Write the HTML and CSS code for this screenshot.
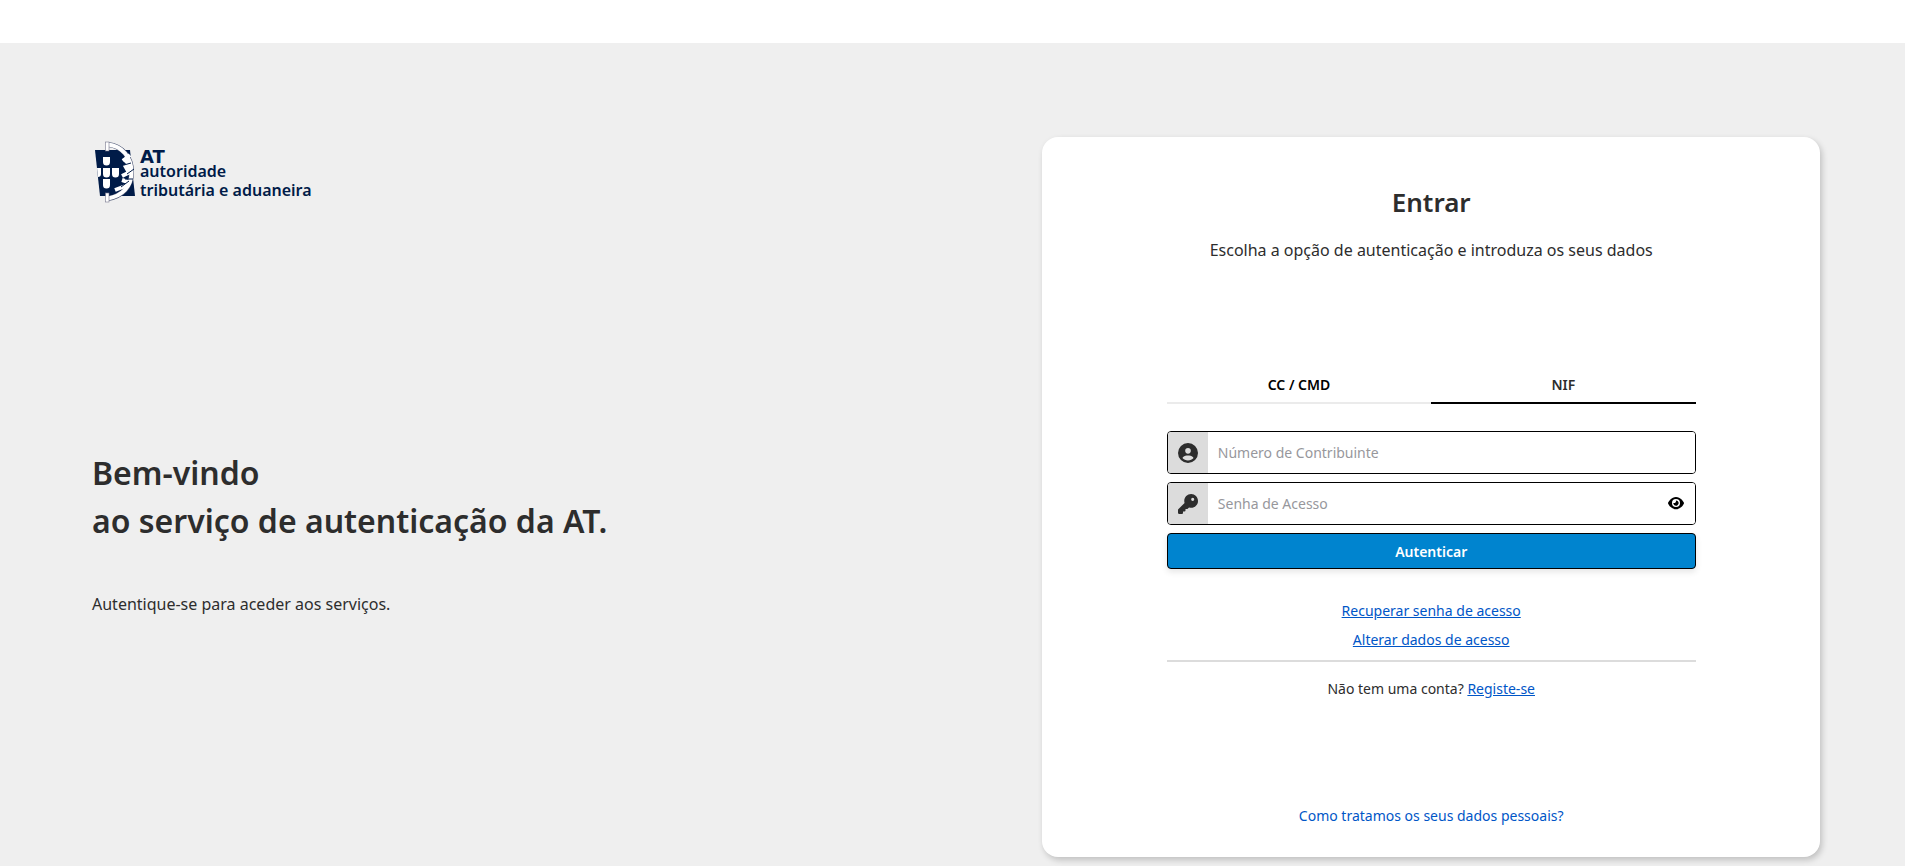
FILE: index.html
```html
<!DOCTYPE html>
<html lang="pt">
<head>
    <meta charset="UTF-8">
    <meta name="viewport" content="width=device-width, initial-scale=1.0">
    <title>Autenticação</title>
    <link rel="stylesheet" href="styles.css">
</head>
<body>
    <header class="topbar"></header>
    <main class="page">
        <section class="intro">
            <div class="logo">
                <svg class="logo-mark" viewBox="0 0 40 62" aria-hidden="true">
                    <path fill="#001b48" d="M0 9H35L40 55H5Z"/>
                    <!-- armillary sphere -->
                    <path fill="none" stroke="#4b5573" stroke-width="5" d="M13 3.500C27 5 36.500 16 36.500 31S27 55 13 57.500"/>
                    <path fill="none" stroke="#fff" stroke-width="4" d="M13 3.500C27 5 36.500 16 36.500 31S27 55 13 57.500"/>
                    <path fill="none" stroke="#fff" stroke-width="4" d="M28 20L35 14M27 35L37 30M27 39L36 42M20 49L33 44"/>
                    <path fill="#fff" d="M27 18L34 15L37 30L33 34L28 25L31 23Z"/>
                    <path fill="none" stroke="#001b48" stroke-width="1" d="M29 24L36 22M32 33L39 28M30 38L38 38M26 46L34 40"/>
                    <rect x="10.500" y="1" width="3.500" height="9" fill="#fff" stroke="#77778c" stroke-width=".6"/>
                    <rect x="10.500" y="52" width="3.500" height="9" fill="#fff" stroke="#77778c" stroke-width=".6"/>
                    <!-- shields -->
                    <path fill="#fff" d="M8 16h7v5a3.500 3.500 0 0 1-7 0ZM8 27h7v6a3.500 3.500 0 0 1-7 0ZM8 38h7v6a3.500 3.500 0 0 1-7 0ZM2 27h4v6a3 3 0 0 1-3 3ZM17 27h7v6a3.500 3.500 0 0 1-7 0Z"/>
                </svg>
                <div class="logo-text">
                    <span class="logo-short">AT</span>
                    <span class="logo-line">autoridade</span>
                    <span class="logo-line logo-last">tributária e aduaneira</span>
                </div>
            </div>
            <h1>Bem-vindo<br>ao serviço de autenticação da AT.</h1>
            <p>Autentique-se para aceder aos serviços.</p>
        </section>

        <section class="card">
            <h2>Entrar</h2>
            <p class="subtitle">Escolha a opção de autenticação e introduza os seus dados</p>
            <div class="tabs" role="tablist">
                <button class="tab" type="button" role="tab" aria-selected="false">CC / CMD</button>
                <button class="tab active" type="button" role="tab" aria-selected="true">NIF</button>
            </div>
            <form class="login">
                <div class="field">
                    <label for="username" aria-label="Número de Contribuinte">
                        <svg class="icon" viewBox="0 0 512 512"><path d="M399 384.200C376.900 345.800 335.400 320 288 320H224c-47.400 0-88.900 25.800-111 64.200c35.200 39.200 86.200 63.800 143 63.800s107.800-24.700 143-63.800zM0 256a256 256 0 1 1 512 0A256 256 0 1 1 0 256zm256 16a72 72 0 1 0 0-144 72 72 0 1 0 0 144z"/></svg>
                    </label>
                    <input type="text" id="username" placeholder="Número de Contribuinte">
                </div>
                <div class="field">
                    <label for="password" aria-label="Senha de Acesso">
                        <svg class="icon" viewBox="0 0 512 512"><path d="M336 352c97.200 0 176-78.800 176-176S433.200 0 336 0S160 78.800 160 176c0 18.700 2.900 36.800 8.300 53.700L7 391c-4.500 4.500-7 10.600-7 17v80c0 13.300 10.700 24 24 24h80c13.300 0 24-10.700 24-24V448h40c13.300 0 24-10.700 24-24V384h40c6.400 0 12.500-2.500 17-7l33.300-33.300c16.900 5.400 35 8.300 53.700 8.300zM376 96a40 40 0 1 1 0 80 40 40 0 1 1 0-80z"/></svg>
                    </label>
                    <input type="password" id="password" placeholder="Senha de Acesso">
                    <button class="toggle" type="button" aria-label="Mostrar senha">
                        <svg viewBox="0 0 576 512"><path d="M288 32c-80.800 0-145.500 36.800-192.600 80.600C48.600 156 17.300 208 2.500 243.700c-3.300 7.900-3.300 16.700 0 24.600C17.300 304 48.600 356 95.400 399.400C142.500 443.200 207.200 480 288 480s145.500-36.800 192.600-80.600c46.800-43.500 78.100-95.400 93-131.100c3.300-7.900 3.300-16.700 0-24.600c-14.900-35.700-46.200-87.700-93-131.100C433.500 68.800 368.800 32 288 32zM144 256a144 144 0 1 1 288 0 144 144 0 1 1-288 0zm144-64c0 35.300-28.700 64-64 64c-7.100 0-13.900-1.200-20.300-3.300c-5.500-1.800-11.900 1.600-11.700 7.400c.3 6.900 1.300 13.800 3.200 20.700c13.700 51.200 66.400 81.600 117.600 67.900s81.600-66.400 67.900-117.600c-11.100-41.500-47.800-69.400-88.600-71.100c-5.800-.2-9.200 6.100-7.400 11.700c2.100 6.400 3.300 13.200 3.300 20.300z"/></svg>
                    </button>
                </div>
                <button class="submit" type="submit">Autenticar</button>
            </form>
            <div class="links">
                <a href="#">Recuperar senha de acesso</a>
                <a href="#">Alterar dados de acesso</a>
            </div>
            <p class="register">Não tem uma conta? <a href="#">Registe-se</a></p>
            <a class="privacy" href="#">Como tratamos os seus dados pessoais?</a>
        </section>
    </main>
</body>
</html>
```

FILE: styles.css
```css
* {
    box-sizing: border-box;
}
body {
    margin: 0;
    font-family: "Noto Sans", sans-serif;
    font-size: 16px;
    line-height: 24px;
    color: #2d2d2d;
    background-color: #efefef;
}
h1, h2, p {
    margin: 0;
}
a {
    color: #0056c7;
}
button, input {
    font-family: inherit;
}
.topbar {
    height: 43px;
    background: #fff;
}
.page {
    display: grid;
    grid-template-columns: 55fr 45fr;
    padding: 94px 85px 10px 92px;
}
.logo {
    display: flex;
    gap: 5px;
    margin-top: 4px;
    color: #001b48;
}
.logo-mark {
    width: 40px;
    height: 62px;
    margin-left: 3px;
}
.logo-text {
    display: flex;
    flex-direction: column;
    padding-top: 9px;
    font-weight: 600;
}
.logo-short {
    font-family: "DejaVu Sans", sans-serif;
    font-size: 18px;
    font-weight: 700;
    line-height: 13px;
}
.logo-line {
    font-size: 16px;
    line-height: 16px;
}
.logo-last {
    line-height: 22px;
}
.intro h1 {
    margin-top: 246px;
    font-size: 32px;
    font-weight: 600;
    line-height: 48px;
}
.intro p {
    margin-top: 47px;
}
.card {
    display: flex;
    flex-direction: column;
    padding: 47px 16% 29px;
    background: #fff;
    border-radius: 16px;
    box-shadow: 2px 3px 6px rgba(0, 0, 0, 0.2);
    text-align: center;
}
.card h2 {
    font-size: 26px;
    font-weight: 600;
    line-height: 36px;
}
.subtitle {
    margin: 18px -40px 0;
}
.tabs {
    display: flex;
    margin-top: 104px;
}
.tab {
    flex: 1;
    height: 38px;
    padding: 0;
    border: 0;
    border-bottom: 2px solid #ebebeb;
    background: none;
    color: #000;
    font-size: 14px;
    font-weight: 600;
    cursor: pointer;
}
.tab.active {
    border-color: #000;
    color: #2d2d2d;
}
.login {
    display: flex;
    flex-direction: column;
    gap: 8px;
    margin-top: 27px;
}
.field {
    display: flex;
    height: 43px;
    overflow: hidden;
    border: 1px solid #000;
    border-radius: 4px;
}
.field label {
    display: flex;
    align-items: center;
    justify-content: center;
    width: 40px;
    background: #dcdcdc;
}
.icon {
    width: 20px;
    height: 20px;
    fill: #2d2d2d;
}
.field input {
    flex: 1;
    min-width: 0;
    padding: 0 10px;
    border: 0;
    outline: 0;
    background: #fff;
    font-size: 14px;
}
.field input::placeholder {
    color: #97979c;
}
.toggle {
    display: flex;
    align-items: center;
    padding: 0 11px;
    border: 0;
    background: #fff;
    cursor: pointer;
}
.toggle svg {
    width: 16px;
}
.submit {
    height: 36px;
    border: 1px solid #000;
    border-radius: 4px;
    background: #0084cf;
    box-shadow: 0 3px 6px rgba(0, 0, 0, 0.1);
    color: #fff;
    font-size: 14px;
    font-weight: 600;
    cursor: pointer;
}
.links {
    display: flex;
    flex-direction: column;
    align-items: center;
    gap: 5px;
    margin-top: 30px;
    padding-bottom: 8px;
    border-bottom: 2px solid #dcdcdc;
    font-size: 14px;
}
.register {
    margin-top: 15px;
    font-size: 14px;
}
.privacy {
    align-self: center;
    margin-top: 103px;
    font-size: 14px;
    text-decoration: none;
}
```
